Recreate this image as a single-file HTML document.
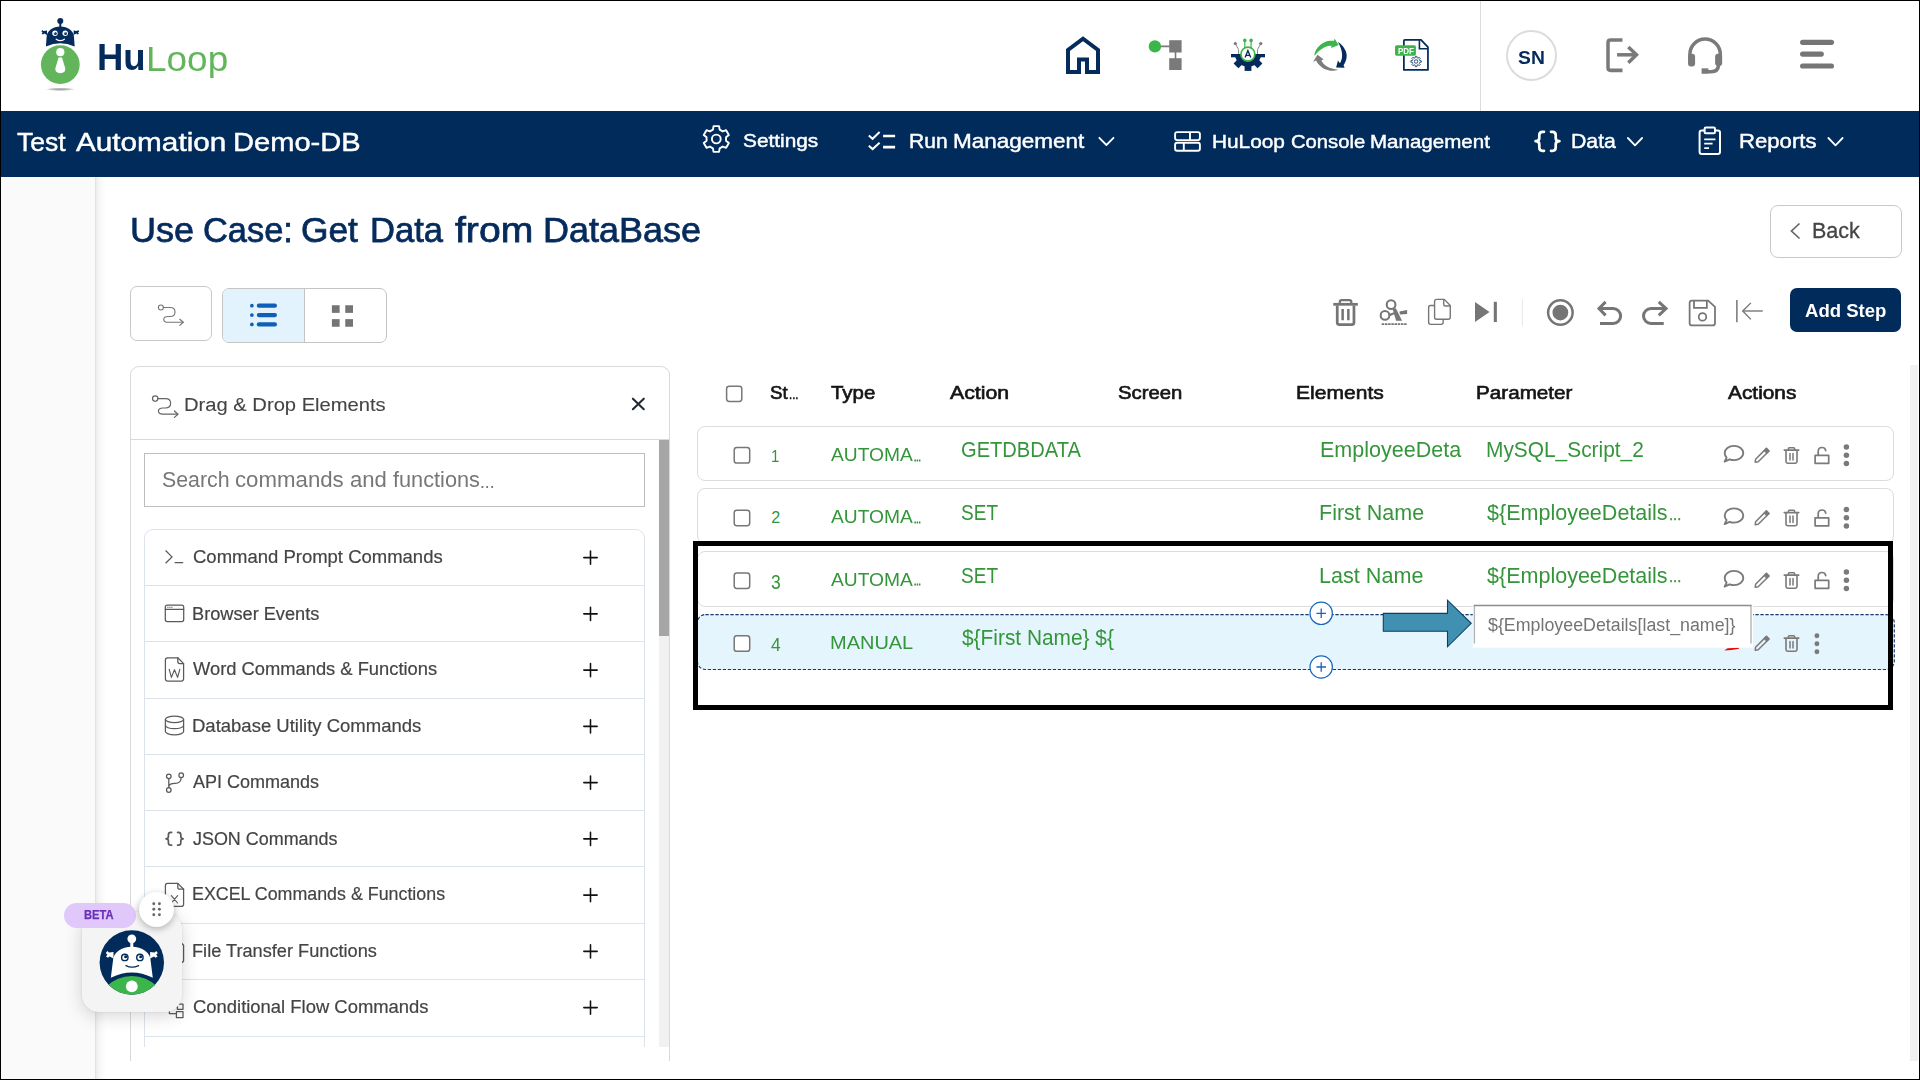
<!DOCTYPE html>
<html lang="en">
<head>
<meta charset="utf-8">
<title>HuLoop - Use Case</title>
<style>
*{box-sizing:border-box;margin:0;padding:0}
html,body{width:1920px;height:1080px;overflow:hidden;background:#fff}
body{position:relative;font-family:"Liberation Sans",sans-serif;color:#222}
.a{position:absolute}
.t{position:absolute;white-space:pre;transform-origin:0 0;font-family:"Liberation Sans",sans-serif}
svg{position:absolute;overflow:visible}
.row{position:absolute;left:697px;width:1197px;height:55px;border:1px solid #dcdcdc;border-radius:8px;background:#fff}
.cb{position:absolute;width:16px;height:16px;border:1.3px solid #767676;border-radius:3px;background:#fff}
.li{position:absolute;left:145px;width:499px;height:1px;background:#dde3eb}
</style>
</head>
<body>
<!-- ===== top header ===== -->
<div class="a" id="hdr" style="left:0;top:0;width:1920px;height:111px;background:#fff"></div>
<div class="a" style="left:1480px;top:1px;width:1px;height:110px;background:#dcdcdc"></div>
<!-- logo -->
<svg style="left:0;top:0" width="260" height="111" viewBox="0 0 260 111">
  <defs><radialGradient id="shd" cx="50%" cy="50%" r="50%"><stop offset="0" stop-color="#9a9a9a"/><stop offset="0.6" stop-color="#c4c4c4"/><stop offset="1" stop-color="#ffffff"/></radialGradient></defs>
  <ellipse cx="60.3" cy="89.3" rx="15" ry="1.7" fill="url(#shd)"/>
  <circle cx="60.3" cy="64.6" r="19.4" fill="#62b55a"/>
  <circle cx="60.3" cy="52.2" r="4.1" fill="#fff"/>
  <path d="M58.6 57.4 H62 L65.3 68.6 Q65.3 73.2 60.3 73.2 Q55.3 73.2 55.3 68.6 Z" fill="#fff"/>
  <!-- robot head -->
  <g fill="#052b5c">
    <circle cx="60.3" cy="21" r="3"/>
    <rect x="59.3" y="22" width="2" height="6"/>
    <path d="M45.9 46.4 L46.6 37.2 A13.7 10.8 0 0 1 74 37.2 L74.7 46.4 Q67.4 43.3 60.3 43.3 Q53.2 43.3 45.9 46.4 Z"/>
    <path d="M47 30.5 L43.5 31 L42.4 30 L41.4 31.4 L42.6 32.6 L41.6 33.8 L43 34.6 L44.2 33.6 L47 35 Z"/>
    <path d="M73.6 30.5 L77.1 31 L78.2 30 L79.2 31.4 L78 32.6 L79 33.8 L77.6 34.6 L76.4 33.6 L73.6 35 Z"/>
  </g>
  <circle cx="55" cy="33.2" r="2.7" fill="#fff"/><circle cx="65.2" cy="33.2" r="2.7" fill="#fff"/>
  <circle cx="55.3" cy="33.4" r="1.5" fill="#052b5c"/><circle cx="65.5" cy="33.4" r="1.5" fill="#052b5c"/>
  <circle cx="54.8" cy="32.8" r="0.6" fill="#fff"/><circle cx="65" cy="32.8" r="0.6" fill="#fff"/>
  <path d="M56.2 39.2 Q60.3 42 64.4 39.2" fill="none" stroke="#fff" stroke-width="1.2" stroke-linecap="round"/>
</svg>
<!-- top icons -->
<svg style="left:1055px;top:25px" width="220" height="60" viewBox="1055 25 220 60">
  <path d="M1068,72 L1068,50 L1083,38.7 L1098,50 L1098,72 L1087,72 L1087,59.4 L1079,59.4 L1079,72 Z" fill="none" stroke="#052b5c" stroke-width="4" stroke-linejoin="miter"/>
  <path d="M1155,46.4 H1172 M1175.5,50 V60" stroke="#7a7a7a" stroke-width="1.6" fill="none"/>
  <circle cx="1154.9" cy="46.4" r="6.2" fill="#3cb54a"/>
  <rect x="1169.2" y="40.2" width="12.4" height="12.3" fill="#7a7a7a"/>
  <rect x="1169.2" y="58.2" width="12.4" height="11.8" fill="#7a7a7a"/>
  <!-- gear A -->
  <defs><clipPath id="hg"><rect x="-20" y="0" width="40" height="20"/></clipPath></defs>
  <g transform="translate(1248,53.9)" fill="#052b5c" clip-path="url(#hg)"><circle r="13"/><rect x="-3.4" y="9" width="6.8" height="8" transform="rotate(0)"/><rect x="-3.4" y="9" width="6.8" height="8" transform="rotate(45)"/><rect x="-3.4" y="9" width="6.8" height="8" transform="rotate(-45)"/><rect x="-3.4" y="9" width="6.8" height="8" transform="rotate(90)"/><rect x="-3.4" y="9" width="6.8" height="8" transform="rotate(-90)"/></g>
  <path d="M1235.3,43.6 L1238.6,49.6 V54 M1260.8,43.6 L1257.5,49.6 V54" fill="none" stroke="#7a7a7a" stroke-width="0.9"/>
  <circle cx="1235.3" cy="43.6" r="1.6" fill="#7a7a7a"/><circle cx="1260.8" cy="43.6" r="1.6" fill="#7a7a7a"/>
  <path d="M1244.8,40.4 V48 M1251.1,40.4 V48" stroke="#3cb54a" stroke-width="1.2"/>
  <circle cx="1244.8" cy="40.4" r="1.8" fill="#3cb54a"/><circle cx="1251.1" cy="40.4" r="1.8" fill="#3cb54a"/>
  <circle cx="1247.9" cy="54.2" r="7" fill="#fff" stroke="#3cb54a" stroke-width="1.7"/>
  <path d="M1245.1,57.6 L1247.9,50.6 L1250.7,57.6 M1246.1,55.4 H1249.7" fill="none" stroke="#052b5c" stroke-width="1.35" stroke-linejoin="miter"/>
</svg>
<svg style="left:1300px;top:30px" width="140" height="50" viewBox="0 0 1920 686">
  <path d="M195,350 C205,270 260,205 330,170 C380,148 430,145 462,150 L475,120 L530,205 L428,247 L432,218 C370,215 300,240 205,345 Z" fill="#3cb54a"/>
  <path d="M520,165 C580,200 640,280 640,350 C640,410 620,450 597,483 L612,517 L495,515 L520,418 L548,455 C585,400 600,300 520,165 Z" fill="#052b5c"/>
  <path d="M525,545 C460,570 380,560 310,520 C265,490 235,455 222,420 L180,437 L240,340 L325,405 L292,415 C320,480 400,535 525,545 Z" fill="#7c7c7c"/>
  <!-- pdf doc -->
  <path d="M1436,135 H1660 L1755,235 V548 H1425 V146 Q1425,135 1436,135 Z" fill="#fff" stroke="#052b5c" stroke-width="24" stroke-linejoin="round"/>
  <path d="M1638,140 V258 H1752" fill="none" stroke="#052b5c" stroke-width="22"/>
  <rect x="1303" y="210" width="287" height="142" rx="22" fill="#3cb54a"/>
    <path d="M1579.86,381.44 L1581.86,360.72 L1602.14,360.72 L1604.14,381.44 L1619.17,387.66 L1635.23,374.42 L1649.58,388.77 L1636.34,404.83 L1642.56,419.86 L1663.28,421.86 L1663.28,442.14 L1642.56,444.14 L1636.34,459.17 L1649.58,475.23 L1635.23,489.58 L1619.17,476.34 L1604.14,482.56 L1602.14,503.28 L1581.86,503.28 L1579.86,482.56 L1564.83,476.34 L1548.77,489.58 L1534.42,475.23 L1547.66,459.17 L1541.44,444.14 L1520.72,442.14 L1520.72,421.86 L1541.44,419.86 L1547.66,404.83 L1534.42,388.77 L1548.77,374.42 L1564.83,387.66 Z" fill="none" stroke="#052b5c" stroke-width="11" stroke-linejoin="round"/>
  <circle cx="1592" cy="432" r="24" fill="none" stroke="#052b5c" stroke-width="11"/>
</svg>
<span class="t" style="left:1397.6px;top:46.8px;font-size:8.3px;line-height:8.3px;font-weight:700;color:#fff;letter-spacing:-0.1px;transform:scaleX(0.97)">PDF</span>
<!-- avatar / logout / headset / menu -->
<div class="a" style="left:1506px;top:30px;width:51px;height:51px;border:2px solid #dcdcdc;border-radius:50%"></div>
<svg style="left:1590px;top:25px" width="260" height="60" viewBox="0 0 1920 443">
  <g fill="none" stroke="#7a7a7a" stroke-width="26">
    <path d="M240,110 H152 Q133,110 133,129 V316 Q133,335 152,335 H240"/>
    <path d="M200,220 H340"/><path d="M283,163 L343,220 L283,279" stroke-linejoin="miter"/>
    <path d="M738,240 V215 A112,112 0 0 1 962,215 V240"/>
    <path d="M950,295 Q945,345 895,345 H870"/>
  </g>
  <rect x="724" y="212" width="52" height="95" rx="22" fill="#7a7a7a"/>
  <rect x="924" y="212" width="52" height="90" rx="22" fill="#7a7a7a"/>
  <rect x="824" y="320" width="50" height="40" fill="#7a7a7a"/>
  <g fill="none" stroke="#757575" stroke-width="38" stroke-linecap="round">
    <path d="M1570,128 H1783"/><path d="M1570,215 H1708"/><path d="M1570,303 H1783"/>
  </g>
</svg>
<!-- ===== navy bar ===== -->
<div class="a" style="left:0;top:111px;width:1920px;height:66px;background:#012b5b"></div>
<!-- nav icons -->
<svg style="left:0;top:111px" width="1920" height="66" viewBox="0 111 1920 66">
  <g fill="none" stroke="#fff" stroke-width="1.9" stroke-linejoin="round" stroke-linecap="round">
    <path d="M712.95,129.69 L713.56,126.09 L719.04,126.09 L719.65,129.69 L722.69,131.44 L726.11,130.17 L728.85,134.92 L726.04,137.25 L726.04,140.75 L728.85,143.08 L726.11,147.83 L722.69,146.56 L719.65,148.31 L719.04,151.91 L713.56,151.91 L712.95,148.31 L709.91,146.56 L706.49,147.83 L703.75,143.08 L706.56,140.75 L706.56,137.25 L703.75,134.92 L706.49,130.17 L709.91,131.44 Z"/>
    <circle cx="716.3" cy="139" r="4.4"/>
    <!-- checklist -->
    <path d="M868.8,135.4 L872.6,138.8 L879.6,132" stroke-linecap="butt" stroke-linejoin="miter" stroke-width="2"/>
    <path d="M868.8,145.7 L872.6,149.1 L879.6,142.8" stroke-linecap="butt" stroke-linejoin="miter" stroke-width="2"/>
    <path d="M883.1,136 H895.1 M883.1,147.1 H895.1" stroke-linecap="butt" stroke-width="2.6"/>
    <!-- console -->
    <rect x="1175.1" y="132.1" width="24.8" height="8" rx="2"/>
    <rect x="1175.1" y="142.8" width="24.8" height="8" rx="2"/>
    <path d="M1190,132.1 V140.1 M1183.8,142.8 V150.8" stroke-linecap="butt"/>
    <!-- chevrons -->
    <path d="M1099.3,137.8 L1106.4,145 L1113.5,137.8" stroke-width="1.8"/>
    <path d="M1627.9,138 L1635,145.3 L1642.1,138" stroke-width="1.8"/>
    <path d="M1828.4,138 L1835.5,145.3 L1842.6,138" stroke-width="1.8"/>
    <!-- braces -->
    <path d="M1544,131.8 H1542.5 Q1539.3,131.8 1539.3,135 V138 Q1539.3,141.2 1535.6,141.2 Q1539.3,141.2 1539.3,144.4 V147.6 Q1539.3,150.8 1542.5,150.8 H1544" stroke-width="2.7"/>
    <path d="M1551,131.8 H1552.5 Q1555.7,131.8 1555.7,135 V138 Q1555.7,141.2 1559.4,141.2 Q1555.7,141.2 1555.7,144.4 V147.6 Q1555.7,150.8 1552.5,150.8 H1551" stroke-width="2.7"/>
    <!-- clipboard -->
    <path d="M1704.5,130.6 H1701.8 Q1699.6,130.6 1699.6,132.8 V151.8 Q1699.6,154 1701.8,154 H1717.8 Q1720,154 1720,151.8 V132.8 Q1720,130.6 1717.8,130.6 H1715" stroke-width="2"/>
    <rect x="1704.6" y="127.6" width="10.4" height="5.6" rx="1.2" stroke-width="2"/>
    <path d="M1704.2,139.3 H1715.4 M1704.2,143.7 H1712.6 M1704.2,148.1 H1709" stroke-width="1.8" stroke-linecap="butt"/>
  </g>
</svg>
<!-- ===== left sidebar ===== -->
<div class="a" style="left:0;top:177px;width:95px;height:903px;background:#fafafa"></div>
<div class="a" style="left:95px;top:177px;width:11px;height:903px;background:linear-gradient(to right,#d9d9d9 0,#ececec 1px,#f6f6f6 4px,#ffffff 11px)"></div>
<!-- ===== title row ===== -->
<div class="a" style="left:1770px;top:205px;width:132px;height:53px;border:1px solid #c9c9c9;border-radius:8px;background:#fff"></div>
<svg style="left:1789px;top:222px" width="14" height="18" viewBox="0 0 14 18"><path d="M10.5 1.5 L2.5 9 L10.5 16.5" fill="none" stroke="#666" stroke-width="1.7"/></svg>
<!-- view buttons -->
<div class="a" style="left:130px;top:286px;width:82px;height:55px;border:1px solid #c9c9c9;border-radius:7px;background:#fff"></div>
<div class="a" style="left:222px;top:288px;width:165px;height:55px;border:1px solid #c4c4c4;border-radius:7px;background:#fff;overflow:hidden">
  <div class="a" style="left:0;top:0;width:82px;height:53px;background:#e3f3fd;border-right:1px solid #c4c4c4"></div>
</div>
<!-- view icons -->
<svg style="left:140px;top:295px" width="240" height="40" viewBox="0 0 1920 320">
  <g fill="none" stroke="#757575" stroke-width="9" stroke-linecap="round" stroke-linejoin="round">
    <circle cx="167" cy="100" r="20"/>
    <path d="M187,100 H242 Q280,100 280,136 Q280,172 242,172 H226 Q190,172 190,195 Q190,218 226,218 H343"/>
    <path d="M318,194 L347,218 L318,243"/>
  </g>
  <g fill="#0f5fb8"><circle cx="895" cy="85" r="15"/><circle cx="895" cy="160" r="15"/><circle cx="895" cy="235" r="15"/></g>
  <g stroke="#0f5fb8" stroke-width="34" stroke-linecap="round"><path d="M951,85 H1079"/><path d="M951,160 H1079"/><path d="M951,235 H1079"/></g>
  <g fill="#757575"><rect x="1535" y="82" width="62" height="61"/><rect x="1642" y="82" width="62" height="61"/><rect x="1535" y="193" width="62" height="61"/><rect x="1642" y="193" width="62" height="61"/></g>
</svg>
<!-- toolbar icons -->
<svg style="left:1320px;top:290px" width="220" height="45" viewBox="0 0 1920 393">
  <g fill="none" stroke="#757575">
    <path d="M115,125 H330" stroke-width="24"/>
    <path d="M172,120 V106 Q172,89 189,89 H256 Q273,89 273,106 V120" stroke-width="20"/>
    <path d="M150,135 V284 Q150,302 168,302 H278 Q296,302 296,284 V135" stroke-width="24"/>
    <path d="M197,165 V265 M247,165 V265" stroke-width="22"/>
    <circle cx="620" cy="128" r="38" stroke-width="18"/>
    <circle cx="567" cy="222" r="38" stroke-width="18"/>
    <path d="M538,298 H758" stroke-width="16" stroke-dasharray="22 6"/>
    <path d="M1000,135 H966 Q948,135 948,153 V282 Q948,300 966,300 H1057 Q1075,300 1075,282 V262" stroke-width="12"/>
    <path d="M1018,82 H1085 L1137,135 V237 Q1137,255 1119,255 H1018 Q1000,255 1000,237 V100 Q1000,82 1018,82 Z" stroke-width="12" fill="#fff" stroke-linejoin="round"/>
    <path d="M1080,86 V124 Q1080,140 1096,140 H1134" stroke-width="12"/>
    <path d="M1767,80 V312" stroke="#b9b9b9" stroke-width="3"/>
  </g>
  <g fill="#757575">
    <path d="M634,168 L662,160 L716,268 L664,268 Z"/>
    <path d="M600,210 L652,193 L658,207 L608,230 Z"/><path d="M693,188 L760,175 L760,210 L697,215 Z"/>
    <path d="M1353,105 L1480,192 L1353,280 Z"/>
    <rect x="1517" y="103" width="27" height="177"/>
  </g>
</svg>
<svg style="left:1535px;top:290px" width="240" height="45" viewBox="0 0 1920 360">
  <g fill="none" stroke="#757575">
    <circle cx="203" cy="180" r="98" stroke-width="20"/>
    <path d="M565,95 L512,148 L565,203" stroke-width="24" stroke-linejoin="miter"/>
    <path d="M520,148 H625 A60,60 0 0 1 625,268 H520" stroke-width="24"/>
    <path d="M990,95 L1048,148 L990,203" stroke-width="24" stroke-linejoin="miter"/>
    <path d="M1040,148 H928 A60,60 0 0 0 928,268 H1030" stroke-width="24"/>
    <path d="M1255,85 H1385 L1440,135 V265 Q1440,283 1422,283 H1255 Q1237,283 1237,265 V103 Q1237,85 1255,85 Z" stroke-width="14" stroke-linejoin="round"/>
    <path d="M1272,88 V143 H1375 V88" stroke-width="14"/>
    <circle cx="1340" cy="215" r="30" stroke-width="14"/>
    <path d="M1615,80 V257" stroke-width="12"/>
    <path d="M1662,168 H1822" stroke-width="11"/>
    <path d="M1727,103 L1662,168 L1727,235" stroke-width="11"/>
  </g>
  <circle cx="203" cy="180" r="63" fill="#757575"/>
</svg>
<div class="a" style="left:1790px;top:288px;width:111px;height:44px;border-radius:7px;background:#012b5b"></div>
<!-- ===== left panel ===== -->
<div class="a" style="left:130px;top:366px;width:540px;height:695px;border:1px solid #d9d9d9;border-bottom:none;border-radius:9px 9px 0 0;background:#fff"></div>
<div class="a" style="left:131px;top:439px;width:538px;height:1px;background:#d9d9d9"></div>
<!-- scrollbar -->
<div class="a" style="left:659px;top:440px;width:10px;height:607px;background:#f1f1f1"></div>
<div class="a" style="left:659px;top:440px;width:10px;height:196px;background:#a6a6a6"></div>
<!-- search -->
<div class="a" style="left:144px;top:453px;width:501px;height:54px;border:1px solid #bdbdbd;background:#fff"></div>
<!-- list container -->
<div class="a" style="left:144px;top:529px;width:501px;height:518px;overflow:hidden">
  <div class="a" style="left:0;top:0;width:501px;height:600px;border:1px solid #dde3eb;border-radius:9px"></div>
</div>
<div class="li" style="top:585px"></div>
<div class="li" style="top:641px"></div>
<div class="li" style="top:698px"></div>
<div class="li" style="top:754px"></div>
<div class="li" style="top:810px"></div>
<div class="li" style="top:866px"></div>
<div class="li" style="top:923px"></div>
<div class="li" style="top:979px"></div>
<div class="li" style="top:1036px"></div>
<!-- list icons -->
<svg style="left:130px;top:366px" width="540" height="694" viewBox="130 366 540 694">
  <!-- header route icon + close -->
  <g fill="none" stroke="#666" stroke-width="1.2" stroke-linecap="round" stroke-linejoin="round">
    <circle cx="155.2" cy="398.6" r="2.7"/>
    <path d="M158,398.6 H165.5 Q170.6,398.6 170.6,403.3 Q170.6,408 165.5,408 H163 Q158.4,408 158.4,411.1 Q158.4,414.2 163,414.2 H177.6"/>
    <path d="M174.4,411 L178,414.2 L174.4,417.4"/>
  </g>
  <path d="M632.9,398.7 L643.8,409.2 M643.8,398.7 L632.9,409.2" stroke="#222a33" stroke-width="2.1" stroke-linecap="round" fill="none"/>
  <path d="M583.8,557.6 H597.2 M590.5,550.9 V564.3000000000001" stroke="#111" stroke-width="1.55" stroke-linecap="round" fill="none"/>
  <path d="M583.8,613.85 H597.2 M590.5,607.15 V620.5500000000001" stroke="#111" stroke-width="1.55" stroke-linecap="round" fill="none"/>
  <path d="M583.8,670.1 H597.2 M590.5,663.4 V676.8000000000001" stroke="#111" stroke-width="1.55" stroke-linecap="round" fill="none"/>
  <path d="M583.8,726.35 H597.2 M590.5,719.65 V733.0500000000001" stroke="#111" stroke-width="1.55" stroke-linecap="round" fill="none"/>
  <path d="M583.8,782.6 H597.2 M590.5,775.9 V789.3000000000001" stroke="#111" stroke-width="1.55" stroke-linecap="round" fill="none"/>
  <path d="M583.8,838.85 H597.2 M590.5,832.15 V845.5500000000001" stroke="#111" stroke-width="1.55" stroke-linecap="round" fill="none"/>
  <path d="M583.8,895.1 H597.2 M590.5,888.4 V901.8000000000001" stroke="#111" stroke-width="1.55" stroke-linecap="round" fill="none"/>
  <path d="M583.8,951.35 H597.2 M590.5,944.65 V958.0500000000001" stroke="#111" stroke-width="1.55" stroke-linecap="round" fill="none"/>
  <path d="M583.8,1007.6 H597.2 M590.5,1000.9 V1014.3000000000001" stroke="#111" stroke-width="1.55" stroke-linecap="round" fill="none"/>
  <g fill="none" stroke="#5a5a5a" stroke-width="1.25" stroke-linejoin="round" stroke-linecap="round">
    <!-- terminal -->
    <path d="M165.6,550.5 L172,556.9 L165.6,563.2 M174.6,562.6 H183.2" stroke-linecap="butt" stroke-linejoin="miter"/>
    <!-- window -->
    <rect x="165.3" y="605.2" width="18.4" height="16.4" rx="2"/>
    <path d="M165.3,609.4 H183.7"/>
    <path d="M167.6,607.3 H168.2 M169.6,607.3 H170.2 M171.6,607.3 H172.2" stroke-width="0.9"/>
    <!-- word file -->
    <path d="M177.8,657.8 H167.6 Q165.4,657.8 165.4,660 V678.8 Q165.4,681 167.6,681 H181.4 Q183.6,681 183.6,678.8 V663.6 Z"/>
    <path d="M177.8,657.8 V661.6 Q177.8,663.6 179.8,663.6 H183.6"/>
    <path d="M169.2,669.4 L171.4,677.4 L174.5,669.8 L177.6,677.4 L179.8,669.4" stroke-width="1.15"/>
    <!-- database -->
    <ellipse cx="174.5" cy="719.4" rx="9.1" ry="3.2"/>
    <path d="M165.4,719.4 V731.6 A9.1,3.2 0 0 0 183.6,731.6 V719.4"/>
    <path d="M165.4,725.5 A9.1,3.2 0 0 0 183.6,725.5"/>
    <!-- branch -->
    <circle cx="168.8" cy="776.3" r="2.3"/><circle cx="168.8" cy="790" r="2.3"/><circle cx="181.2" cy="775.2" r="2.3"/>
    <path d="M168.8,778.6 V787.7 M181.2,777.5 Q181.2,783.4 175,783.4 Q168.8,783.4 168.8,787"/>
    <!-- braces -->
    <path d="M171.6,832.4 H170.8 Q168.4,832.4 168.4,834.8 V836.6 Q168.4,838.8 166,838.8 Q168.4,838.8 168.4,841 V842.8 Q168.4,845.2 170.8,845.2 H171.6" stroke-width="1.7"/>
    <path d="M177.6,832.4 H178.4 Q180.8,832.4 180.8,834.8 V836.6 Q180.8,838.8 183.2,838.8 Q180.8,838.8 180.8,841 V842.8 Q180.8,845.2 178.4,845.2 H177.6" stroke-width="1.7"/>
    <!-- excel file -->
    <path d="M177.8,883.4 H167.6 Q165.4,883.4 165.4,885.6 V904.2 Q165.4,906.4 167.6,906.4 H181.4 Q183.6,906.4 183.6,904.2 V889.2 Z"/>
    <path d="M177.8,883.4 V887.2 Q177.8,889.2 179.8,889.2 H183.6"/>
    <path d="M171.4,895.6 L177.6,903 M177.6,895.6 L171.4,903" stroke-width="1.15"/>
    <!-- file transfer -->
    <path d="M177.8,939.4 H167.6 Q165.4,939.4 165.4,941.6 V960.2 Q165.4,962.4 167.6,962.4 H181.4 Q183.6,962.4 183.6,960.2 V945.2 Z"/>
    <path d="M169,952 H179 M175.6,948.6 L179,952 L175.6,955.4"/>
    <!-- conditional -->
    <rect x="177.4" y="1004.2" width="5.6" height="5.2"/>
    <rect x="176.4" y="1011.6" width="6.6" height="6"/>
    <path d="M169.4,1002 V1013.6 H176.4 M169.4,1006.8 H177.4" stroke-linecap="butt"/>
  </g>
</svg>
<!-- ===== table ===== -->
<div class="row" style="top:426px"></div>
<div class="row" style="top:488px;height:56px"></div>
<div class="row" style="top:551px;height:56px"></div>
<svg style="left:690px;top:608px" width="1215" height="70" viewBox="690 608 1215 70"><rect x="697.4" y="614.6" width="1196.9" height="54.9" rx="8" fill="#e5f5fe" stroke="#16396a" stroke-width="1.15" stroke-dasharray="3.3 1.7"/></svg>
<svg style="left:720px;top:380px" width="40" height="280" viewBox="720 380 40 280"><g fill="#fff" stroke="#777" stroke-width="1.5"><rect x="726.6" y="386.2" width="15.2" height="15.2" rx="2.6"/><rect x="734.2" y="447.55" width="15.5" height="15.5" rx="2.6"/><rect x="734.2" y="510.15" width="15.5" height="15.5" rx="2.6"/><rect x="734.2" y="572.95" width="15.5" height="15.5" rx="2.6"/><rect x="734.2" y="635.75" width="15.5" height="15.5" rx="2.6"/></g></svg>
<!-- row action icons -->
<svg style="left:1700px;top:420px" width="200" height="260" viewBox="1700 420 200 260">
  <g fill="none" stroke="#7a7a7a" stroke-linejoin="round" stroke-linecap="round">
  <g transform="translate(0,0)"><path d="M1734,445.9 C1739.3,445.9 1743.3,449 1743.3,453 C1743.3,457 1739.3,460.1 1734,460.1 C1732.4,460.1 1730.9,459.8 1729.6,459.3 L1724.6,461.6 L1726.6,457.6 C1725.4,456.3 1724.7,454.7 1724.7,453 C1724.7,449 1728.7,445.9 1734,445.9 Z" stroke-width="1.9"/><path d="M1815.1,455.4 H1828.7 V463.3 H1815.1 Z M1818.2,455.2 V451.4 Q1818.2,447.5 1822,447.5 Q1825.4,447.5 1825.7,450.6" stroke-width="1.7"/><path d="M1755.2,462.2 L1755.6,459.2 L1766.4,448.4 L1769,451 L1758.2,461.8 Z" stroke-width="1.5"/><path d="M1764.2,450.6 L1766.4,448.4 L1769,451 L1766.8,453.2 Z" fill="#7a7a7a" stroke-width="1.2"/><path d="M1784.2,450.1 H1798.8 M1788.4,449.6 V448.6 Q1788.4,447.7 1789.3,447.7 H1793.7 Q1794.6,447.7 1794.6,448.6 V449.6 M1786,451 V461.6 Q1786,463.2 1787.6,463.2 H1795.4 Q1797,463.2 1797,461.6 V451" stroke-width="1.6"/><path d="M1790,453.4 V460 M1793,453.4 V460" stroke-width="1.5"/><circle cx="1846.4" cy="447" r="2.75" fill="#7a7a7a" stroke="none"/><circle cx="1846.4" cy="455.25" r="2.75" fill="#7a7a7a" stroke="none"/><circle cx="1846.4" cy="463.5" r="2.75" fill="#7a7a7a" stroke="none"/></g>
  <g transform="translate(0,62.5)"><path d="M1734,445.9 C1739.3,445.9 1743.3,449 1743.3,453 C1743.3,457 1739.3,460.1 1734,460.1 C1732.4,460.1 1730.9,459.8 1729.6,459.3 L1724.6,461.6 L1726.6,457.6 C1725.4,456.3 1724.7,454.7 1724.7,453 C1724.7,449 1728.7,445.9 1734,445.9 Z" stroke-width="1.9"/><path d="M1815.1,455.4 H1828.7 V463.3 H1815.1 Z M1818.2,455.2 V451.4 Q1818.2,447.5 1822,447.5 Q1825.4,447.5 1825.7,450.6" stroke-width="1.7"/><path d="M1755.2,462.2 L1755.6,459.2 L1766.4,448.4 L1769,451 L1758.2,461.8 Z" stroke-width="1.5"/><path d="M1764.2,450.6 L1766.4,448.4 L1769,451 L1766.8,453.2 Z" fill="#7a7a7a" stroke-width="1.2"/><path d="M1784.2,450.1 H1798.8 M1788.4,449.6 V448.6 Q1788.4,447.7 1789.3,447.7 H1793.7 Q1794.6,447.7 1794.6,448.6 V449.6 M1786,451 V461.6 Q1786,463.2 1787.6,463.2 H1795.4 Q1797,463.2 1797,461.6 V451" stroke-width="1.6"/><path d="M1790,453.4 V460 M1793,453.4 V460" stroke-width="1.5"/><circle cx="1846.4" cy="447" r="2.75" fill="#7a7a7a" stroke="none"/><circle cx="1846.4" cy="455.25" r="2.75" fill="#7a7a7a" stroke="none"/><circle cx="1846.4" cy="463.5" r="2.75" fill="#7a7a7a" stroke="none"/></g>
  <g transform="translate(0,125)"><path d="M1734,445.9 C1739.3,445.9 1743.3,449 1743.3,453 C1743.3,457 1739.3,460.1 1734,460.1 C1732.4,460.1 1730.9,459.8 1729.6,459.3 L1724.6,461.6 L1726.6,457.6 C1725.4,456.3 1724.7,454.7 1724.7,453 C1724.7,449 1728.7,445.9 1734,445.9 Z" stroke-width="1.9"/><path d="M1815.1,455.4 H1828.7 V463.3 H1815.1 Z M1818.2,455.2 V451.4 Q1818.2,447.5 1822,447.5 Q1825.4,447.5 1825.7,450.6" stroke-width="1.7"/><path d="M1755.2,462.2 L1755.6,459.2 L1766.4,448.4 L1769,451 L1758.2,461.8 Z" stroke-width="1.5"/><path d="M1764.2,450.6 L1766.4,448.4 L1769,451 L1766.8,453.2 Z" fill="#7a7a7a" stroke-width="1.2"/><path d="M1784.2,450.1 H1798.8 M1788.4,449.6 V448.6 Q1788.4,447.7 1789.3,447.7 H1793.7 Q1794.6,447.7 1794.6,448.6 V449.6 M1786,451 V461.6 Q1786,463.2 1787.6,463.2 H1795.4 Q1797,463.2 1797,461.6 V451" stroke-width="1.6"/><path d="M1790,453.4 V460 M1793,453.4 V460" stroke-width="1.5"/><circle cx="1846.4" cy="447" r="2.75" fill="#7a7a7a" stroke="none"/><circle cx="1846.4" cy="455.25" r="2.75" fill="#7a7a7a" stroke="none"/><circle cx="1846.4" cy="463.5" r="2.75" fill="#7a7a7a" stroke="none"/></g>
  <g transform="translate(0,188)"><path d="M1755.2,462.2 L1755.6,459.2 L1766.4,448.4 L1769,451 L1758.2,461.8 Z" stroke-width="1.5"/><path d="M1764.2,450.6 L1766.4,448.4 L1769,451 L1766.8,453.2 Z" fill="#7a7a7a" stroke-width="1.2"/><path d="M1784.2,450.1 H1798.8 M1788.4,449.6 V448.6 Q1788.4,447.7 1789.3,447.7 H1793.7 Q1794.6,447.7 1794.6,448.6 V449.6 M1786,451 V461.6 Q1786,463.2 1787.6,463.2 H1795.4 Q1797,463.2 1797,461.6 V451" stroke-width="1.6"/><path d="M1790,453.4 V460 M1793,453.4 V460" stroke-width="1.5"/><circle cx="1816.9" cy="447.8" r="2.45" fill="#7a7a7a" stroke="none"/><circle cx="1816.9" cy="455.8" r="2.45" fill="#7a7a7a" stroke="none"/><circle cx="1816.9" cy="463.8" r="2.45" fill="#7a7a7a" stroke="none"/></g>
  </g>
  <path d="M1724.2,650.4 L1727.6,648.3 L1739,647.7 L1739,648.7 L1731.5,649.9 Z" fill="#f00808"/>
</svg>
<!-- black highlight rectangle -->
<div class="a" style="left:693px;top:541px;width:1200px;height:169px;border:5px solid #000;z-index:20"></div>
<!-- overlay: plus circles, arrow, tooltip -->
<svg style="left:1290px;top:590px;z-index:25" width="480" height="100" viewBox="1290 590 480 100">
  <g fill="#fff" stroke="#1565c0" stroke-width="1.2">
    <circle cx="1321.2" cy="613.3" r="11.2"/><circle cx="1321.2" cy="667" r="11.2"/>
  </g>
  <path d="M1316.4,613.3 H1326 M1321.2,608.5 V618.1 M1316.4,667 H1326 M1321.2,662.2 V671.8" stroke="#1565c0" stroke-width="1.3" fill="none"/>
  <path d="M1383.3,613.4 H1447.5 V600.2 L1471.2,623.3 L1447.5,646.8 V631.2 H1383.3 Z" fill="#4090b1" stroke="#173a63" stroke-width="1.1" stroke-linejoin="miter"/>
  <rect x="1472.8" y="604.4" width="280.2" height="43.3" fill="#fff"/>
  <path d="M1474.4,643.5 V605.6 M1751,605.6 V643.5" fill="none" stroke="#b4b4b4" stroke-width="1.4" style="filter:blur(0.4px)"/><path d="M1473.8,605.5 H1751.6" fill="none" stroke="#8c8c8c" stroke-width="1.5" style="filter:blur(0.4px)"/>
</svg>
<!-- right page scrollbar track -->
<div class="a" style="left:1910px;top:365px;width:8px;height:696px;background:#f1f1f1"></div>
<!-- chatbot widget -->
<div class="a" style="left:82px;top:912px;width:100px;height:100px;border-radius:17px;background:#f4f4f4;box-shadow:0 4px 18px rgba(0,0,0,0.16),0 0 3px rgba(0,0,0,0.08);z-index:40"></div>
<div class="a" style="left:63.5px;top:903px;width:72.5px;height:24.5px;border-radius:13px;background:#e0c8fb;z-index:41"></div>
<div class="a" style="left:139px;top:892px;width:35px;height:35px;border-radius:50%;background:#fff;box-shadow:0 2px 7px rgba(0,0,0,0.28);z-index:41"></div>
<svg style="left:60px;top:880px;z-index:43" width="140" height="140" viewBox="60 880 140 140">
  <g fill="#666"><circle cx="153.8" cy="903.8" r="1.45"/><circle cx="159.4" cy="903.8" r="1.45"/><circle cx="153.8" cy="909.3" r="1.45"/><circle cx="159.4" cy="909.3" r="1.45"/><circle cx="153.8" cy="914.8" r="1.45"/><circle cx="159.4" cy="914.8" r="1.45"/></g>
  <defs><clipPath id="av"><circle cx="131.8" cy="962.5" r="32.2"/></clipPath></defs>
  <circle cx="131.8" cy="962.5" r="32.2" fill="#012b5b"/>
  <g clip-path="url(#av)">
    <circle cx="131.8" cy="1012" r="36" fill="#3cb54a"/>
    <circle cx="131.8" cy="986.4" r="5.9" fill="#fff"/>
  </g>
  <g fill="#fff">
    <circle cx="131.8" cy="938.8" r="4.4"/><rect x="130.3" y="941" width="3" height="8"/>
    <path d="M110.8,977.8 L113,960.6 A18.8,13.8 0 0 1 150.6,960.6 L152.8,977.8 Q142,972.5 131.8,972.5 Q121.6,972.5 110.8,977.8 Z"/>
    <path d="M113.5,952 L109,952.6 L107.4,951 L105.8,953 L107.4,954.8 L106,956.6 L108,957.8 L109.6,956.4 L113.5,958.6 Z"/>
    <path d="M150.1,952 L154.6,952.6 L156.2,951 L157.8,953 L156.2,954.8 L157.6,956.6 L155.6,957.8 L154,956.4 L150.1,958.6 Z"/>
  </g>
  <circle cx="124.8" cy="957.4" r="3.2" fill="#fff" stroke="#012b5b" stroke-width="1.4"/><circle cx="139.9" cy="957.4" r="3.2" fill="#fff" stroke="#012b5b" stroke-width="1.4"/>
  <circle cx="125.6" cy="956.8" r="1.5" fill="#012b5b"/><circle cx="140.7" cy="956.8" r="1.5" fill="#012b5b"/>
  <path d="M126,965.6 Q131.8,968.8 138.6,965.6" fill="none" stroke="#012b5b" stroke-width="1.3" stroke-linecap="round"/>
</svg>
<span class="t" style="left:96.60px;top:39.97px;font-size:36.42px;line-height:36.42px;color:#052b5c;transform:scaleX(1.0025);font-weight:700;">Hu</span>
<span class="t" style="left:145.62px;top:41.67px;font-size:35.59px;line-height:35.59px;color:#62b55a;transform:scaleX(1.0385);">Loop</span>
<span class="t" style="left:17.10px;top:128.61px;font-size:26.64px;line-height:26.64px;color:#ffffff;transform:scaleX(0.9943);-webkit-text-stroke:0.45px #ffffff;">Test</span>
<span class="t" style="left:76.20px;top:128.61px;font-size:26.64px;line-height:26.64px;color:#ffffff;transform:scaleX(1.1159);-webkit-text-stroke:0.45px #ffffff;">Automation</span>
<span class="t" style="left:233.41px;top:128.61px;font-size:26.64px;line-height:26.64px;color:#ffffff;transform:scaleX(1.0928);-webkit-text-stroke:0.45px #ffffff;">Demo-DB</span>
<span class="t" style="left:743.00px;top:131.47px;font-size:19.25px;line-height:19.25px;color:#ffffff;transform:scaleX(1.0808);-webkit-text-stroke:0.45px #ffffff;">Settings</span>
<span class="t" style="left:909.49px;top:130.65px;font-size:20.81px;line-height:20.81px;color:#ffffff;transform:scaleX(1.0113);-webkit-text-stroke:0.45px #ffffff;">Run</span>
<span class="t" style="left:953.42px;top:130.65px;font-size:20.81px;line-height:20.81px;color:#ffffff;transform:scaleX(1.0820);-webkit-text-stroke:0.45px #ffffff;">Management</span>
<span class="t" style="left:1212.22px;top:131.67px;font-size:19.25px;line-height:19.25px;color:#ffffff;transform:scaleX(1.0818);-webkit-text-stroke:0.45px #ffffff;">HuLoop</span>
<span class="t" style="left:1290.60px;top:131.68px;font-size:19.25px;line-height:19.25px;color:#ffffff;transform:scaleX(1.0498);-webkit-text-stroke:0.45px #ffffff;">Console</span>
<span class="t" style="left:1370.03px;top:131.67px;font-size:19.25px;line-height:19.25px;color:#ffffff;transform:scaleX(1.0668);-webkit-text-stroke:0.45px #ffffff;">Management</span>
<span class="t" style="left:1570.73px;top:131.14px;font-size:20.81px;line-height:20.81px;color:#ffffff;transform:scaleX(1.0205);-webkit-text-stroke:0.45px #ffffff;">Data</span>
<span class="t" style="left:1738.94px;top:131.15px;font-size:20.81px;line-height:20.81px;color:#ffffff;transform:scaleX(1.0641);-webkit-text-stroke:0.45px #ffffff;">Reports</span>
<span class="t" style="left:1518.00px;top:48.95px;font-size:18.73px;line-height:18.73px;color:#052b5c;transform:scaleX(1.0320);font-weight:700;">SN</span>
<span class="t" style="left:129.66px;top:213.24px;font-size:34.55px;line-height:34.55px;color:#052b5c;transform:scaleX(1.0434);-webkit-text-stroke:0.75px #052b5c;">Use</span>
<span class="t" style="left:203.25px;top:213.24px;font-size:34.55px;line-height:34.55px;color:#052b5c;transform:scaleX(0.9954);-webkit-text-stroke:0.75px #052b5c;">Case:</span>
<span class="t" style="left:300.73px;top:213.24px;font-size:34.55px;line-height:34.55px;color:#052b5c;transform:scaleX(1.0211);-webkit-text-stroke:0.75px #052b5c;">Get</span>
<span class="t" style="left:370.00px;top:213.24px;font-size:34.55px;line-height:34.55px;color:#052b5c;transform:scaleX(0.9999);-webkit-text-stroke:0.75px #052b5c;">Data</span>
<span class="t" style="left:455.00px;top:213.24px;font-size:34.55px;line-height:34.55px;color:#052b5c;transform:scaleX(1.1327);-webkit-text-stroke:0.75px #052b5c;">from</span>
<span class="t" style="left:542.92px;top:213.24px;font-size:34.55px;line-height:34.55px;color:#052b5c;transform:scaleX(1.0417);-webkit-text-stroke:0.75px #052b5c;">DataBase</span>
<span class="t" style="left:1811.72px;top:220.26px;font-size:21.85px;line-height:21.85px;color:#444;transform:scaleX(0.9845);-webkit-text-stroke:0.3px #444;">Back</span>
<span class="t" style="left:1805.30px;top:301.10px;font-size:19.25px;line-height:19.25px;color:#ffffff;transform:scaleX(0.9639);font-weight:700;">Add Step</span>
<span class="t" style="left:183.95px;top:395.20px;font-size:19.25px;line-height:19.25px;color:#444;transform:scaleX(1.0474);-webkit-text-stroke:0.1px #444;">Drag &amp; Drop Elements</span>
<span class="t" style="left:161.70px;top:469.30px;font-size:21.85px;line-height:21.85px;color:#777;transform:scaleX(0.9770);">Search</span>
<span class="t" style="left:234.80px;top:469.30px;font-size:21.85px;line-height:21.85px;color:#777;transform:scaleX(1.0177);">commands</span>
<span class="t" style="left:350.20px;top:469.30px;font-size:21.85px;line-height:21.85px;color:#777;transform:scaleX(1.0114);">and</span>
<span class="t" style="left:392.50px;top:469.30px;font-size:21.85px;line-height:21.85px;color:#777;transform:scaleX(0.9942);">functions</span>
<span class="t" style="left:480.39px;top:471.55px;font-size:19.2px;line-height:19.2px;color:#777;transform:scaleX(0.9076);-webkit-text-stroke:0.11px #777;">...</span>
<span class="t" style="left:193.40px;top:548.15px;font-size:18.73px;line-height:18.73px;color:#444;transform:scaleX(0.9876);-webkit-text-stroke:0.2px #444;">Command Prompt Commands</span>
<span class="t" style="left:192.43px;top:604.65px;font-size:18.73px;line-height:18.73px;color:#444;transform:scaleX(0.9713);-webkit-text-stroke:0.2px #444;">Browser Events</span>
<span class="t" style="left:193.40px;top:660.15px;font-size:18.73px;line-height:18.73px;color:#444;transform:scaleX(0.9792);-webkit-text-stroke:0.2px #444;">Word Commands &amp; Functions</span>
<span class="t" style="left:192.41px;top:716.65px;font-size:18.73px;line-height:18.73px;color:#444;transform:scaleX(0.9882);-webkit-text-stroke:0.2px #444;">Database Utility Commands</span>
<span class="t" style="left:193.40px;top:773.15px;font-size:18.73px;line-height:18.73px;color:#444;transform:scaleX(0.9616);-webkit-text-stroke:0.2px #444;">API Commands</span>
<span class="t" style="left:193.40px;top:829.65px;font-size:18.73px;line-height:18.73px;color:#444;transform:scaleX(0.9577);-webkit-text-stroke:0.2px #444;">JSON Commands</span>
<span class="t" style="left:192.45px;top:885.15px;font-size:18.73px;line-height:18.73px;color:#444;transform:scaleX(0.9526);-webkit-text-stroke:0.2px #444;">EXCEL Commands &amp; Functions</span>
<span class="t" style="left:192.43px;top:941.65px;font-size:18.73px;line-height:18.73px;color:#444;transform:scaleX(0.9712);-webkit-text-stroke:0.2px #444;">File Transfer Functions</span>
<span class="t" style="left:193.40px;top:998.15px;font-size:18.73px;line-height:18.73px;color:#444;transform:scaleX(0.9844);-webkit-text-stroke:0.2px #444;">Conditional Flow Commands</span>
<span class="t" style="left:770.00px;top:383.07px;font-size:19.25px;line-height:19.25px;color:#151515;transform:scaleX(0.9714);-webkit-text-stroke:0.65px #151515;">St</span>
<span class="t" style="left:789.30px;top:388.76px;font-size:12.54px;line-height:12.54px;color:#151515;transform:scaleX(0.9037);-webkit-text-stroke:0.5px #151515;">...</span>
<span class="t" style="left:830.70px;top:383.07px;font-size:19.25px;line-height:19.25px;color:#151515;transform:scaleX(1.0627);-webkit-text-stroke:0.65px #151515;">Type</span>
<span class="t" style="left:950.00px;top:383.07px;font-size:19.25px;line-height:19.25px;color:#151515;transform:scaleX(1.1043);-webkit-text-stroke:0.65px #151515;">Action</span>
<span class="t" style="left:1117.70px;top:383.06px;font-size:19.25px;line-height:19.25px;color:#151515;transform:scaleX(1.0550);-webkit-text-stroke:0.65px #151515;">Screen</span>
<span class="t" style="left:1296.21px;top:383.07px;font-size:19.25px;line-height:19.25px;color:#151515;transform:scaleX(1.0939);-webkit-text-stroke:0.65px #151515;">Elements</span>
<span class="t" style="left:1475.63px;top:383.07px;font-size:19.25px;line-height:19.25px;color:#151515;transform:scaleX(1.0731);-webkit-text-stroke:0.65px #151515;">Parameter</span>
<span class="t" style="left:1728.30px;top:383.07px;font-size:19.25px;line-height:19.25px;color:#151515;transform:scaleX(1.0832);-webkit-text-stroke:0.65px #151515;">Actions</span>
<span class="t" style="left:770.56px;top:447.55px;font-size:16.13px;line-height:16.13px;color:#35953b;transform:scaleX(0.9375);">1</span>
<span class="t" style="left:771.30px;top:509.35px;font-size:16.13px;line-height:16.13px;color:#35953b;transform:scaleX(1.0000);">2</span>
<span class="t" style="left:771.30px;top:572.22px;font-size:20.29px;line-height:20.29px;color:#35953b;transform:scaleX(0.8636);">3</span>
<span class="t" style="left:771.20px;top:636.27px;font-size:18.11px;line-height:18.11px;color:#35953b;transform:scaleX(0.9600);">4</span>
<span class="t" style="left:831.20px;top:444.90px;font-size:19.25px;line-height:19.25px;color:#35953b;transform:scaleX(0.9980);">AUTOMA</span>
<span class="t" style="left:914.40px;top:452.65px;font-size:9.6px;line-height:9.6px;color:#35953b;transform:scaleX(0.8600);letter-spacing:-0.061px;-webkit-text-stroke:0.76px #35953b;">...</span>
<span class="t" style="left:831.20px;top:506.90px;font-size:19.25px;line-height:19.25px;color:#35953b;transform:scaleX(0.9980);">AUTOMA</span>
<span class="t" style="left:914.40px;top:514.65px;font-size:9.6px;line-height:9.6px;color:#35953b;transform:scaleX(0.8600);letter-spacing:-0.061px;-webkit-text-stroke:0.76px #35953b;">...</span>
<span class="t" style="left:831.20px;top:569.50px;font-size:19.25px;line-height:19.25px;color:#35953b;transform:scaleX(0.9980);">AUTOMA</span>
<span class="t" style="left:914.40px;top:577.25px;font-size:9.6px;line-height:9.6px;color:#35953b;transform:scaleX(0.8600);letter-spacing:-0.061px;-webkit-text-stroke:0.76px #35953b;">...</span>
<span class="t" style="left:830.46px;top:632.90px;font-size:19.25px;line-height:19.25px;color:#35953b;transform:scaleX(1.0375);">MANUAL</span>
<span class="t" style="left:960.88px;top:439.30px;font-size:21.85px;line-height:21.85px;color:#35953b;transform:scaleX(0.9206);">GETDBDATA</span>
<span class="t" style="left:961.30px;top:501.70px;font-size:21.85px;line-height:21.85px;color:#35953b;transform:scaleX(0.8709);">SET</span>
<span class="t" style="left:961.30px;top:564.50px;font-size:21.85px;line-height:21.85px;color:#35953b;transform:scaleX(0.8709);">SET</span>
<span class="t" style="left:961.70px;top:626.50px;font-size:21.85px;line-height:21.85px;color:#35953b;transform:scaleX(0.9549);">${First Name} ${</span>
<span class="t" style="left:1319.71px;top:438.50px;font-size:21.85px;line-height:21.85px;color:#35953b;transform:scaleX(0.9851);">EmployeeDeta</span>
<span class="t" style="left:1486.34px;top:438.50px;font-size:21.85px;line-height:21.85px;color:#35953b;transform:scaleX(0.9557);">MySQL_Script_2</span>
<span class="t" style="left:1319.02px;top:501.50px;font-size:21.85px;line-height:21.85px;color:#35953b;transform:scaleX(0.9844);">First Name</span>
<span class="t" style="left:1487.30px;top:501.50px;font-size:21.85px;line-height:21.85px;color:#35953b;transform:scaleX(0.9851);">${EmployeeDetails</span>
<span class="t" style="left:1669.32px;top:506.62px;font-size:16.72px;line-height:16.72px;color:#35953b;transform:scaleX(0.8794);-webkit-text-stroke:0.34px #35953b;">...</span>
<span class="t" style="left:1319.01px;top:564.90px;font-size:21.85px;line-height:21.85px;color:#35953b;transform:scaleX(0.9887);">Last Name</span>
<span class="t" style="left:1487.30px;top:564.90px;font-size:21.85px;line-height:21.85px;color:#35953b;transform:scaleX(0.9851);">${EmployeeDetails</span>
<span class="t" style="left:1669.32px;top:569.02px;font-size:16.72px;line-height:16.72px;color:#35953b;transform:scaleX(0.8794);-webkit-text-stroke:0.34px #35953b;">...</span>
<span class="t" style="left:1487.50px;top:615.10px;font-size:19.25px;line-height:19.25px;color:#747474;transform:scaleX(0.9251);filter:blur(0.4px);z-index:30;">${EmployeeDetails[last_name]}</span>
<span class="t" style="left:84.10px;top:909.33px;font-size:12.8px;line-height:12.8px;color:#6a2fb5;transform:scaleX(0.8709);font-weight:700;-webkit-text-stroke:0.25px #6a2fb5;z-index:42;">BETA</span>
<!-- outer black frame -->
<div class="a" style="left:0;top:0;width:1920px;height:1px;background:#000;z-index:50"></div>
<div class="a" style="left:0;top:0;width:1px;height:1080px;background:#000;z-index:50"></div>
<div class="a" style="left:1919px;top:0;width:1px;height:1080px;background:#000;z-index:50"></div>
<div class="a" style="left:0;top:1079px;width:1920px;height:1px;background:#000;z-index:50"></div>
</body>
</html>
